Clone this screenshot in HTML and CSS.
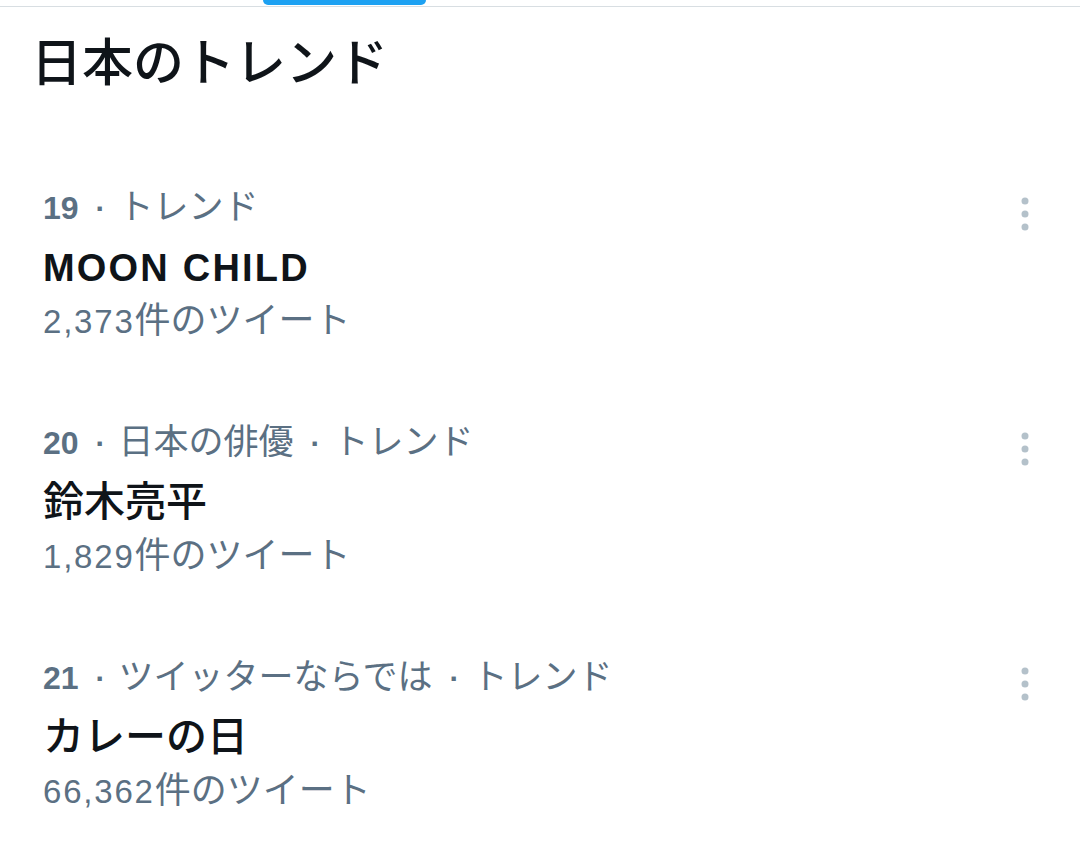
FILE: index.html
```html
<!DOCTYPE html>
<html lang="ja">
<head>
<meta charset="utf-8">
<title>日本のトレンド</title>
<link rel="stylesheet" href="styles.css">
</head>
<body>
<div class="tabbar"><div class="indicator"></div></div>
<h2 class="heading">日本のトレンド</h2>
<ul class="trends">
  <li class="trend">
    <div class="info">
      <div class="meta"><b class="num">19</b><span class="sep">·</span>トレンド</div>
      <div class="name"><span class="latin">MOON CHILD</span></div>
      <div class="count"><span class="num">2,373</span>件のツイート</div>
    </div>
    <button class="more" aria-label="その他">
      <svg viewBox="0 0 14 40" width="14" height="40"><circle cx="7" cy="7" r="3.5"/><circle cx="7" cy="20" r="3.5"/><circle cx="7" cy="33" r="3.5"/></svg>
    </button>
  </li>
  <li class="trend">
    <div class="info">
      <div class="meta"><b class="num">20</b><span class="sep">·</span>日本の俳優<span class="sep">·</span>トレンド</div>
      <div class="name">鈴木亮平</div>
      <div class="count"><span class="num">1,829</span>件のツイート</div>
    </div>
    <button class="more" aria-label="その他">
      <svg viewBox="0 0 14 40" width="14" height="40"><circle cx="7" cy="7" r="3.5"/><circle cx="7" cy="20" r="3.5"/><circle cx="7" cy="33" r="3.5"/></svg>
    </button>
  </li>
  <li class="trend">
    <div class="info">
      <div class="meta"><b class="num">21</b><span class="sep">·</span>ツイッターならでは<span class="sep">·</span>トレンド</div>
      <div class="name">カレーの日</div>
      <div class="count"><span class="num">66,362</span>件のツイート</div>
    </div>
    <button class="more" aria-label="その他">
      <svg viewBox="0 0 14 40" width="14" height="40"><circle cx="7" cy="7" r="3.5"/><circle cx="7" cy="20" r="3.5"/><circle cx="7" cy="33" r="3.5"/></svg>
    </button>
  </li>
</ul>
</body>
</html>
```
FILE: styles.css
```css
* { box-sizing: border-box; }
html, body {
  margin: 0;
  padding: 0;
  background: #ffffff;
}
body {
  font-family: "Noto Sans CJK JP", "Liberation Sans", sans-serif;
  color: #0f1419;
}
.tabbar {
  height: 7px;
  border-bottom: 1px solid #d8dee2;
}
.indicator {
  margin-left: 263px;
  width: 163px;
  height: 5px;
  background: #1da1f2;
  border-radius: 0 0 5px 5px;
}
.heading {
  margin: 0;
  padding: 24px 0 0 31px;
  font-size: 51px;
  line-height: 56px;
  font-weight: 500;
  color: #0f1419;
}
.trends {
  list-style: none;
  margin: 87px 0 0;
  padding: 0;
}
.trend {
  display: flex;
  align-items: flex-start;
  justify-content: space-between;
  height: 235px;
  padding: 0 48px 0 43px;
}
.info {
  display: flex;
  flex-direction: column;
}
.meta {
  font-size: 35px;
  line-height: 60px;
  color: #5b7083;
  white-space: nowrap;
}
.count {
  font-size: 36px;
  line-height: 51px;
  color: #5b7083;
  white-space: nowrap;
}
.num {
  font-family: "Liberation Sans", sans-serif;
  font-size: 33px;
  line-height: 1;
  letter-spacing: 1.8px;
}
b.num {
  font-size: 32px;
  font-weight: 700;
  letter-spacing: 0;
}
.sep {
  display: inline-block;
  width: 40px;
  padding-left: 17px;
  font-family: "Liberation Sans", sans-serif;
  font-size: 30px;
  line-height: 1;
  font-weight: 700;
}
.name {
  font-size: 41px;
  line-height: 58px;
  font-weight: 500;
  color: #0f1419;
}
.latin {
  font-family: "Liberation Sans", sans-serif;
  font-weight: 700;
  font-size: 38px;
  line-height: 1;
  letter-spacing: 2.2px;
}
.more {
  border: 0;
  background: none;
  padding: 0;
  margin-top: 20px;
  width: 14px;
  height: 40px;
  display: flex;
}
.more svg { fill: #b4c1ca; }
```
